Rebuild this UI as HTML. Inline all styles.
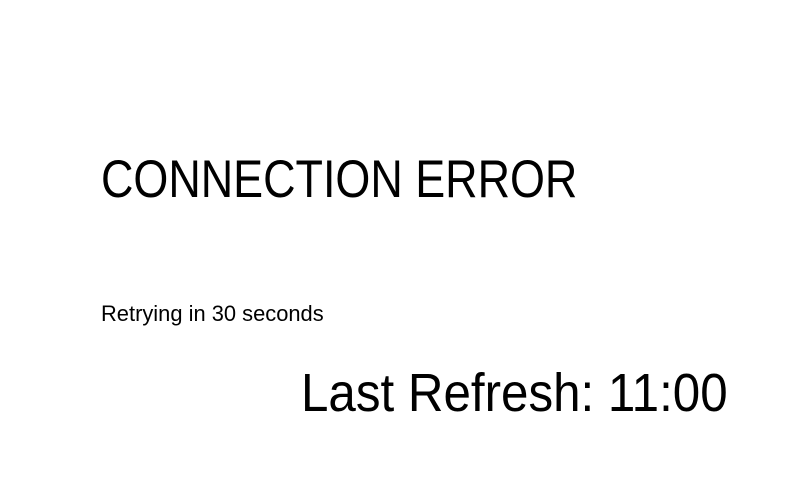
<!DOCTYPE html>
<html><head><style>
html,body{margin:0;padding:0;background:#fff;width:800px;height:480px;overflow:hidden}
div{position:absolute;font-family:"Liberation Sans",sans-serif;line-height:1;color:#000;white-space:nowrap;transform-origin:left top}
</style></head><body>
<div style="left:101px;top:153px;font-size:53px;transform:scaleX(0.847)">CONNECTION ERROR</div>
<div style="left:101px;top:303px;font-size:22px;transform:scaleX(0.995)">Retrying in 30 seconds</div>
<div style="left:301px;top:366px;font-size:54px;transform:scaleX(0.913)">Last Refresh: 11:00</div>
</body></html>
